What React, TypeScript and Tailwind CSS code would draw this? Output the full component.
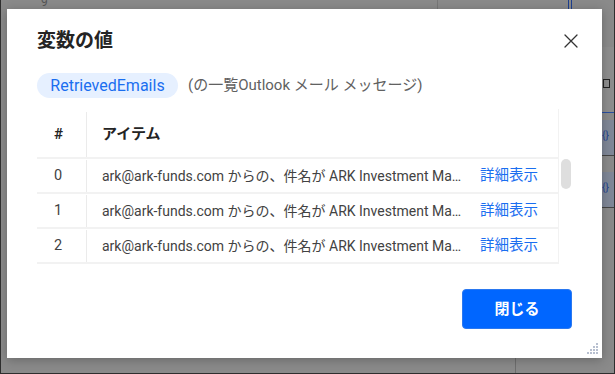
import React from 'react';

const items = [0, 1, 2];

export default function App() {
  const font = { fontFamily: 'Roboto, "Noto Sans CJK JP", sans-serif' };
  return (
    <div
      className="relative w-[615px] h-[374px] overflow-hidden bg-[#8a8a8a] border-l border-r border-b border-[#2e2e2e]"
      style={font}
    >
      {/* dimmed app behind the dialog */}
      <div className="absolute left-[40px] -top-[5px] text-[12px] leading-[14px] text-[#555]">9</div>
      <div className="absolute left-[436px] top-0 h-[9px] w-px bg-[#777]" />
      <div className="absolute left-[567px] top-0 h-[9px] w-[4px] border-l border-r border-[#1d3f8f]" />
      <div className="absolute left-[514px] top-[358px] h-[16px] w-px bg-[#6e6e6e]" />
      <div className="absolute left-[601px] top-[47px] w-[13px] h-[66px] bg-[#8e8e8e] border-b border-[#2b4fa0]">
        <div className="mt-[32px] ml-[1px] w-[7px] h-[9px] border border-[#222]" />
      </div>
      <div className="absolute left-[601px] top-[120px] w-[13px] h-[36px] bg-[#7f8797] border-b border-[#444]">
        <span className="block mt-[8px] text-[10px] text-[#1d3f8f]">{'{}'}</span>
      </div>
      <div className="absolute left-[601px] top-[172px] w-[13px] h-[36px] bg-[#7f8797] border-b border-[#444]">
        <span className="block mt-[8px] text-[10px] text-[#1d3f8f]">{'{}'}</span>
      </div>

      {/* dialog */}
      <div className="absolute left-[6px] top-[9px] w-[595px] h-[349px] bg-white shadow-[0_2px_10px_rgba(0,0,0,0.25)] flex flex-col px-[30px] pt-[18px]">
        <div className="flex items-center justify-between h-[28px]">
          <h2 className="text-[19px] leading-[28px] font-semibold text-[#242424]">変数の値</h2>
          <svg width="14" height="14" viewBox="0 0 14 14" className="mr-[-6px]">
            <path d="M1 1 L13 13 M13 1 L1 13" stroke="#333" strokeWidth="1.3" strokeLinecap="round" />
          </svg>
        </div>

        <div className="flex items-center gap-[10px] mt-[18px] h-[25px]">
          <span className="h-[25px] w-[141px] text-center rounded-full bg-[#e6f0ff] text-[#1a6ef0] text-[16px] leading-[25px]">
            RetrievedEmails
          </span>
          <span className="text-[15px] text-[#616161]">(の一覧Outlook メール メッセージ)</span>
        </div>

        <div className="relative mt-[11px] w-[522px]">
          <div className="flex h-[50px] pt-[3px] border-b-2 border-[#f2f2f2] border-r border-r-[#f2f2f2]">
            <div className="w-[50px] border-r border-[#ebebeb] pl-[17px] flex items-center text-[15px] font-semibold text-[#242424]">#</div>
            <div className="flex-1 pl-[15px] flex items-center text-[15px] font-semibold text-[#242424]">アイテム</div>
          </div>
          {items.map(i => (
            <div key={i} className="flex h-[35px] pt-[1px] border-b-2 border-[#f2f2f2] border-r border-r-[#f2f2f2]">
              <div className="w-[50px] border-r border-[#ebebeb] pl-[17px] flex items-center text-[14.5px] text-[#424242]">{i}</div>
              <div className="flex-1 pl-[15px] pr-[20px] flex items-center justify-between text-[14px]">
                <span className="whitespace-nowrap text-[#424242]">ark@ark-funds.com からの、件名が ARK Investment Ma…</span>
                <span className="whitespace-nowrap text-[14.5px] text-[#1a6ef0]">詳細表示</span>
              </div>
            </div>
          ))}
          <div className="absolute left-[524px] top-[50px] w-[10px] h-[30px] rounded-full bg-[#dedede]" />
        </div>

        <div className="flex justify-end mt-auto mb-[29px]">
          <button className="w-[110px] h-[40px] rounded-[4px] bg-[#0066ff] border border-[#2a78f0] text-white text-[15px] font-bold">
            閉じる
          </button>
        </div>

        {/* resize grip */}
        <svg width="12" height="12" viewBox="0 0 12 12" className="absolute right-[3px] bottom-[3px]">
          {[
            [9, 0], [9, 3], [6, 3], [9, 6], [6, 6], [3, 6], [9, 9], [6, 9], [3, 9], [0, 9],
          ].map(([x, y], k) => (
            <rect key={k} x={x} y={y} width="2" height="2" fill="#b8c0d0" />
          ))}
        </svg>
      </div>
    </div>
  );
}
